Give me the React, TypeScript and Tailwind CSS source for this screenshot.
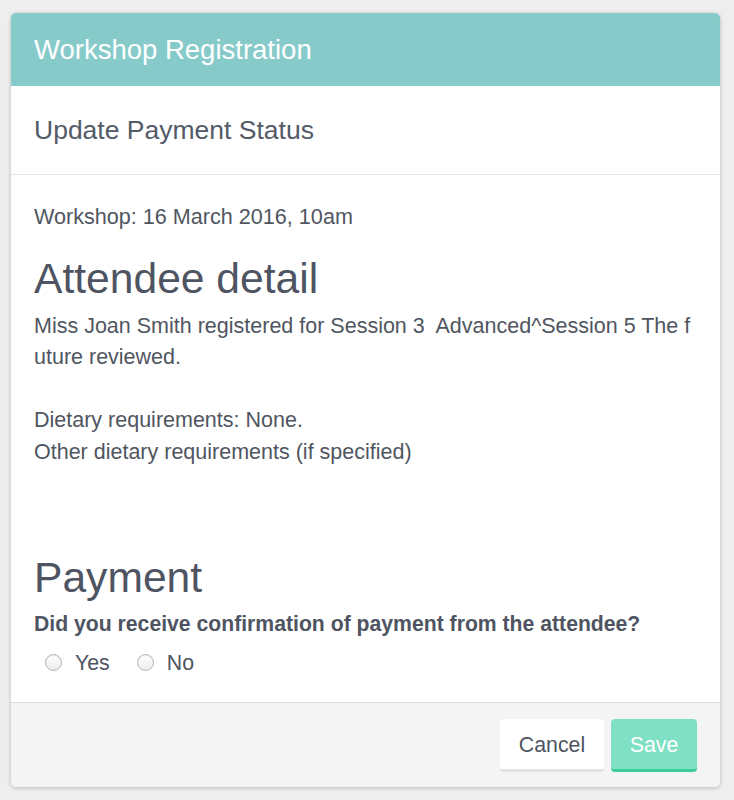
import React from "react";

function Radio({ label }: { label: string }) {
  return (
    <label className="flex items-center">
      <span className="block h-[17px] w-[17px] rounded-full border border-[#b3b3b3] bg-[linear-gradient(#ffffff,#ececec)] shadow-[inset_0_1px_1px_rgba(0,0,0,0.08)]" />
      <span className="ml-[13px] text-[21.3px] leading-[30px] text-[#4e5461]">{label}</span>
    </label>
  );
}

export default function App() {
  return (
    <div
      className="min-h-[800px] w-full bg-[#eeeeee] pt-[13px]"
      style={{ fontFamily: '"Liberation Sans", Arial, sans-serif' }}
    >
      <div className="ml-[11px] w-[709px] rounded-[5px] bg-white shadow-[0_1px_4px_rgba(0,0,0,0.22)]">
        <div className="flex h-[73px] items-center rounded-t-[5px] bg-[#86cbca] px-[23px]">
          <h1 className="text-[27.5px] font-normal leading-none text-white">Workshop Registration</h1>
        </div>
        <div className="flex h-[89px] items-center border-b border-[#e6e6e6] px-[23px]">
          <h2 className="text-[26.5px] font-normal leading-none text-[#535a68]">Update Payment Status</h2>
        </div>
        <div className="px-[23px] pt-[26px] pb-[25px]">
          <p className="text-[21.6px] leading-[31.5px] text-[#50565f]">Workshop: 16 March 2016, 10am</p>
          <h3 className="mt-[22px] text-[42.6px] font-normal leading-[46px] text-[#4e5461]">Attendee detail</h3>
          <div className="mt-[10px] text-[21.5px] leading-[31.5px] text-[#50565f]">
            <div className="whitespace-pre">Miss Joan Smith registered for Session 3  Advanced^Session 5 The f</div>
            <div className="whitespace-pre">uture reviewed.</div>
            <div className="h-[31.5px]" />
            <div className="whitespace-pre">Dietary requirements: None.</div>
            <div className="whitespace-pre">Other dietary requirements (if specified)</div>
          </div>
          <h3 className="mt-[86px] text-[42.6px] font-normal leading-[46px] text-[#4e5461]">Payment</h3>
          <p className="mt-[8px] whitespace-pre text-[21.2px] font-bold leading-[31.5px] text-[#4e5461]">
            Did you receive confirmation of payment from the attendee?
          </p>
          <div className="mt-[7px] flex h-[30px] items-center gap-[27px] pl-[11px] pt-[2px]">
            <Radio label="Yes" />
            <Radio label="No" />
          </div>
        </div>
        <div className="flex h-[85px] items-center justify-end gap-[7px] rounded-b-[5px] border-t border-[#dddddd] bg-[#f4f4f4] px-[23px] pt-[2px]">
          <button className="h-[53px] w-[104px] rounded-[4px] border-b-[3px] border-[#e2e2e2] bg-white pt-[3px] text-[21.3px] text-[#4e5461]">
            Cancel
          </button>
          <button className="h-[53px] w-[86px] rounded-[4px] border-b-[3px] border-[#3ccb9b] bg-[#7fe0c4] pt-[3px] text-[21.3px] text-white">
            Save
          </button>
        </div>
      </div>
    </div>
  );
}
